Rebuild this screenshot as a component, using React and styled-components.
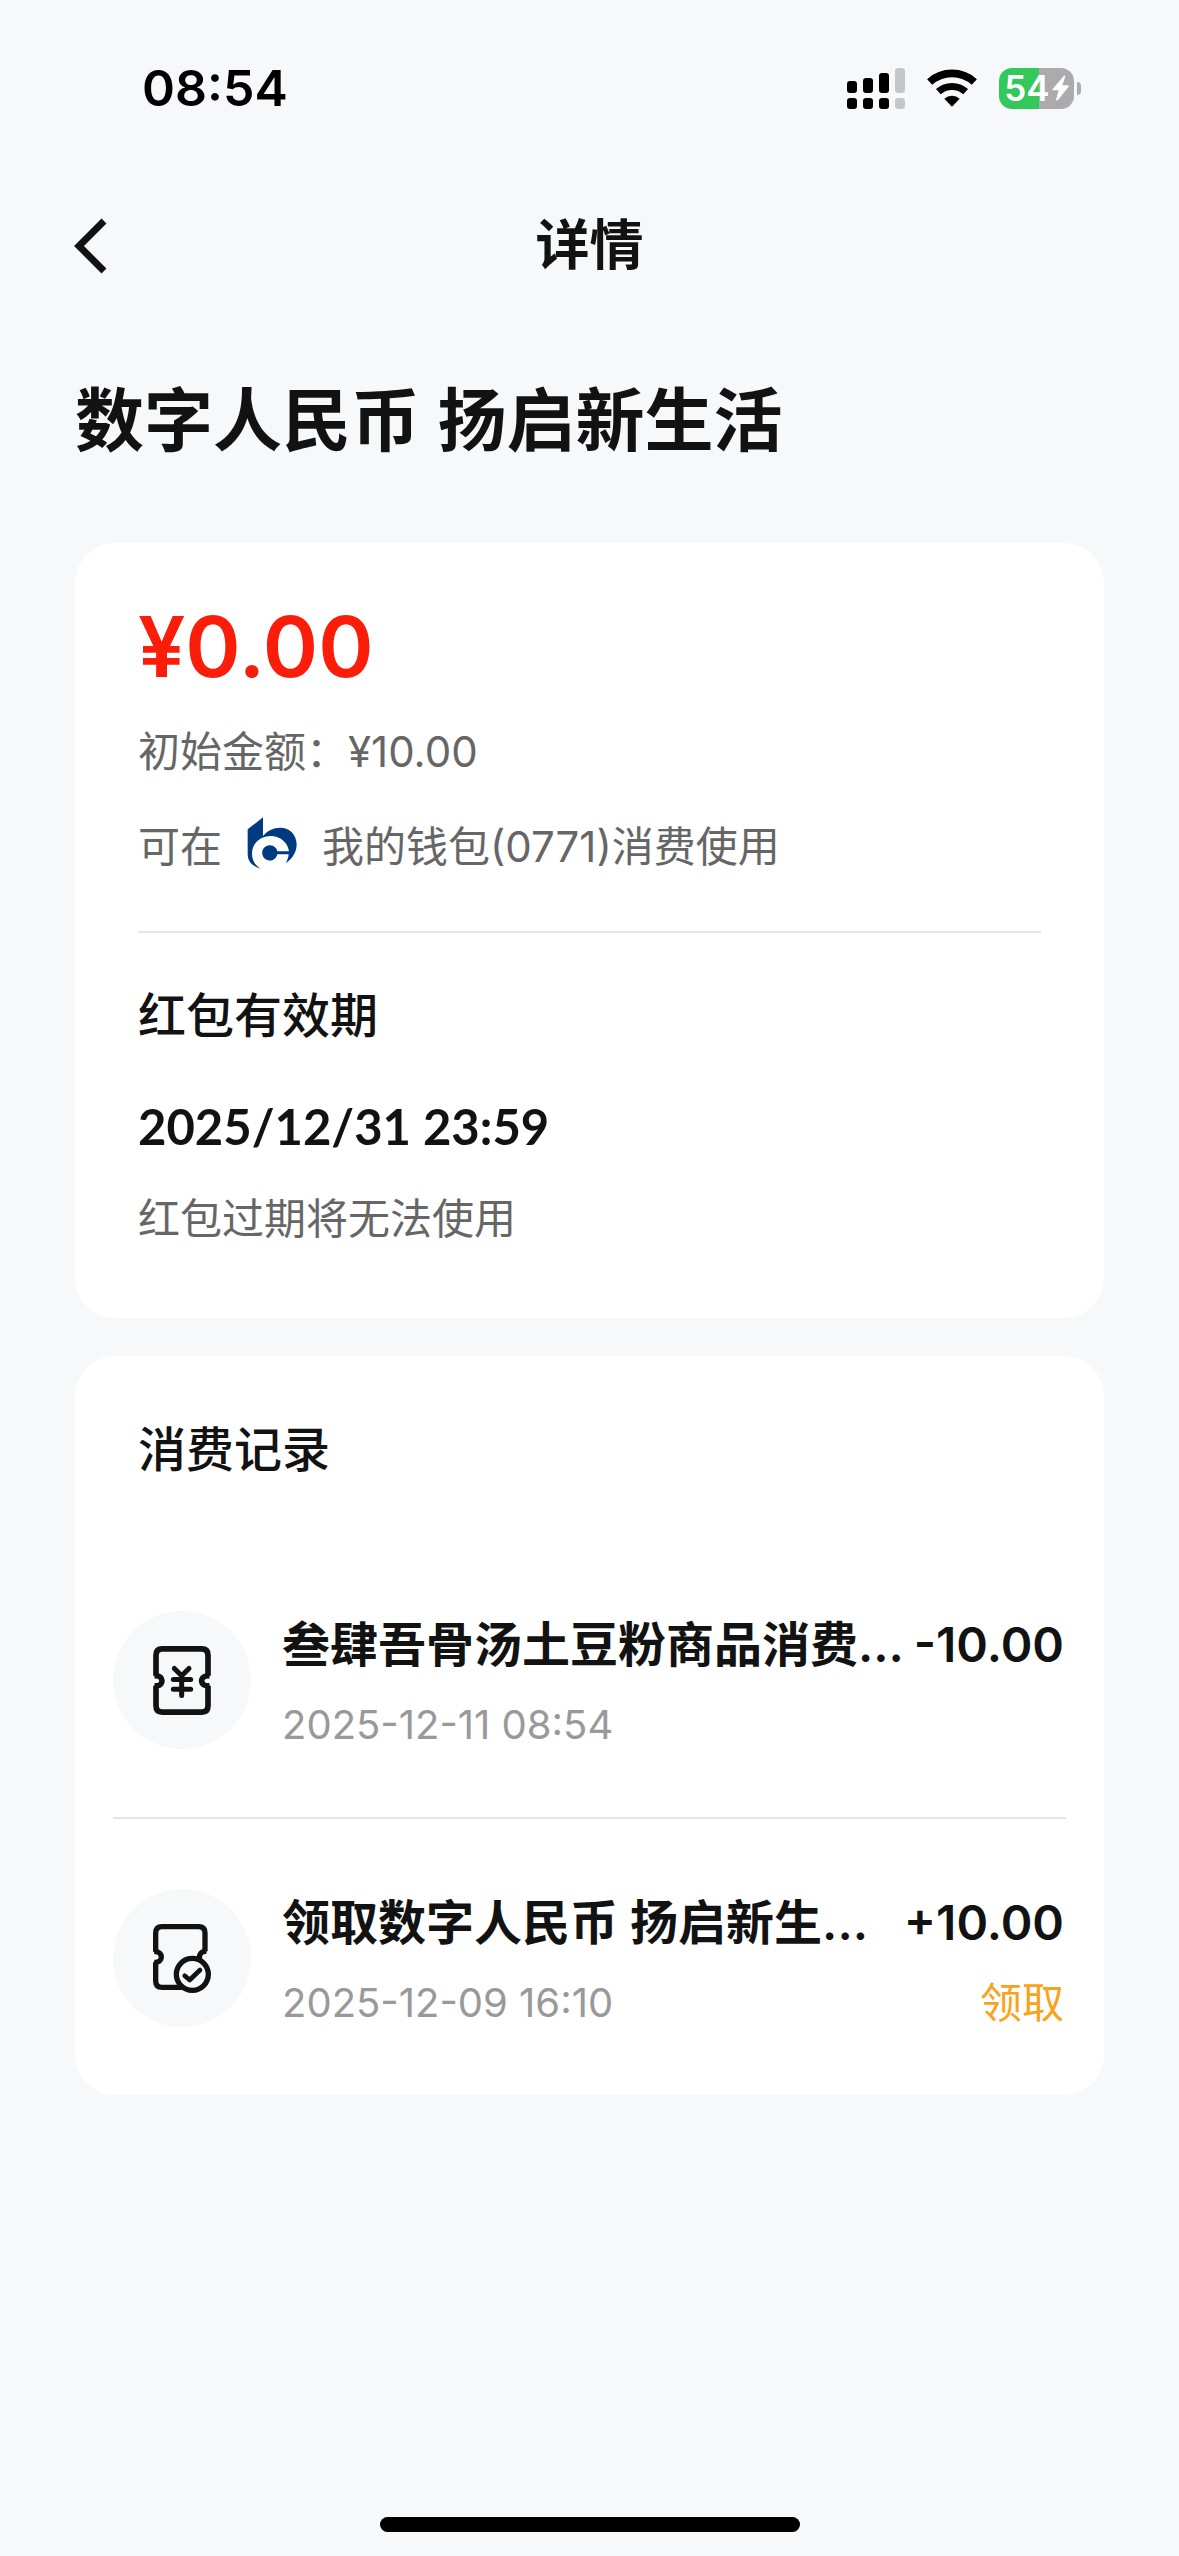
import React from "react";
import styled, { createGlobalStyle } from "styled-components";

const COLORS = {
  page: "#f7f8fa",
  card: "#ffffff",
  text: "#121212",
  muted: "#666666",
  faint: "#999999",
  line: "#e5e5e5",
  red: "#fa1e0a",
  orange: "#faa21b",
  bank: "#003a80",
};

const records = [
  {
    id: 1,
    icon: "spend",
    title: "叁肆吾骨汤土豆粉商品消费...",
    time: "2025-12-11 08:54",
    amount: "-10.00",
  },
  {
    id: 2,
    icon: "receive",
    title: "领取数字人民币 扬启新生...",
    time: "2025-12-09 16:10",
    amount: "+10.00",
    tag: "领取",
  },
];

const SignalIcon = () => (
  <svg width="58" height="41" viewBox="0 0 174 123" aria-hidden="true">
    <rect x="0" y="39" width="30" height="36" rx="9" />
    <rect x="48" y="30" width="30" height="45" rx="9" />
    <rect x="96" y="15" width="30" height="60" rx="9" />
    <rect x="144" y="0" width="30" height="75" rx="9" fill="#c5c6c8" />
    <rect x="0" y="90" width="30" height="33" rx="9" />
    <rect x="48" y="90" width="30" height="33" rx="9" />
    <rect x="96" y="90" width="30" height="33" rx="9" />
    <rect x="144" y="90" width="30" height="33" rx="9" fill="#c5c6c8" />
  </svg>
);

const WifiIcon = () => (
  <svg width="50" height="38" viewBox="0 0 150 114" aria-hidden="true">
    <g fill="none" stroke="#000">
      <path d="M8 39A100 100 0 0 1 142 39" strokeWidth="23" />
      <path d="M34 68A61 61 0 0 1 116 68" strokeWidth="21" />
    </g>
    <path d="M75 113L52 89A34 34 0 0 1 98 89Z" />
  </svg>
);

const BoltIcon = () => (
  <svg width="17" height="26" viewBox="0 0 51 78" aria-hidden="true">
    <path
      d="M36 2L2 42Q0 46 4 46H20L12 74Q14 78 18 75L50 35Q51 31 47 31H31L40 4Q39 0 36 2Z"
      fill="#fff"
    />
  </svg>
);

const BackIcon = () => (
  <svg width="33" height="56" viewBox="0 0 33 56" aria-hidden="true">
    <path d="M30 3L5 28L30 53" fill="none" stroke={COLORS.text} strokeWidth="7" />
  </svg>
);

const BankLogo = () => (
  <svg width="50" height="60" viewBox="532 861 150 180" aria-hidden="true">
    <path
      fill={COLORS.bank}
      d="M580 862L534 898V972C534 998 552 1010 574 1016C557 1007 547 991 547 971C547 940 573 918 603 918C632 918 655 938 658 964H623A23 23 0 1 0 623 973H657C656 983 653 991 648 999C668 988 681 966 681 943C681 915 660 893 632 893C610 893 594 902 580 918Z"
    />
  </svg>
);

const SpendIcon = () => (
  <svg width="58" height="69" viewBox="249 915 174 206" aria-hidden="true">
    <g fill="none" stroke={COLORS.text}>
      <path
        strokeWidth="17"
        d="M253 1004C269 1002 276 1010 276 1019C276 1028 269 1036 253 1034M258 1004V942Q258 923 277 923H395Q414 923 414 942V1004M258 1034V1094Q258 1113 277 1113H395Q414 1113 414 1094V1034M419 1004C403 1002 395 1010 395 1019C395 1028 403 1036 419 1034"
      />
      <path
        strokeWidth="15"
        strokeLinecap="round"
        strokeLinejoin="round"
        d="M313 982L335 1004L357 982M335 1004V1063M310 1015H362M310 1044H362"
      />
    </g>
  </svg>
);

const ReceiveIcon = () => (
  <svg width="58" height="69" viewBox="248 186 174 207" aria-hidden="true">
    <g fill="none" stroke={COLORS.text} strokeWidth="16">
      <path d="M251 269C266 267 273 276 273 285C273 294 266 303 251 301M256 269V213Q256 194 275 194H385Q404 194 404 213V268M256 301V357Q256 376 275 376H338M409 268C394 266 386 276 387 292" />
      <circle cx="366" cy="337" r="48" />
      <path
        strokeWidth="14"
        strokeLinecap="round"
        strokeLinejoin="round"
        d="M343 341L358 354L389 324"
      />
    </g>
  </svg>
);

const App = () => (
  <Page>
    <GlobalStyle />
    <StatusBar>
      <Clock>08:54</Clock>
      <StatusIcons>
        <SignalIcon />
        <WifiIcon />
        <BatteryWrap>
          <Battery $level={54}>
            54
            <BoltIcon />
          </Battery>
          <BatteryCap />
        </BatteryWrap>
      </StatusIcons>
    </StatusBar>

    <NavBar>
      <BackButton type="button" aria-label="返回">
        <BackIcon />
      </BackButton>
      <NavTitle>详情</NavTitle>
    </NavBar>

    <Main>
      <PageTitle>数字人民币 扬启新生活</PageTitle>

      <SummaryCard>
        <Balance>¥0.00</Balance>
        <Note>初始金额：¥10.00</Note>
        <WalletLine>
          <span>可在</span>
          <BankLogo />
          <span>我的钱包(0771)消费使用</span>
        </WalletLine>
        <Divider />
        <CardTitle>红包有效期</CardTitle>
        <Expiry>2025/12/31 23:59</Expiry>
        <Note>红包过期将无法使用</Note>
      </SummaryCard>

      <RecordsCard>
        <RecordsTitle>消费记录</RecordsTitle>
        <RecordList>
          {records.map((record) => (
            <RecordItem key={record.id}>
              <IconCircle>
                {record.icon === "spend" ? <SpendIcon /> : <ReceiveIcon />}
              </IconCircle>
              <RecordBody>
                <RecordLine>
                  <RecordName>{record.title}</RecordName>
                  <RecordAmount>{record.amount}</RecordAmount>
                </RecordLine>
                <RecordLine>
                  <RecordTime>{record.time}</RecordTime>
                  {record.tag && <RecordTag>{record.tag}</RecordTag>}
                </RecordLine>
              </RecordBody>
            </RecordItem>
          ))}
        </RecordList>
      </RecordsCard>
    </Main>

    <HomeIndicator />
  </Page>
);

const GlobalStyle = createGlobalStyle`
  *, *::before, *::after {
    box-sizing: border-box;
  }
  body {
    margin: 0;
    background: ${COLORS.page};
  }
  h1, h2, p, ul {
    margin: 0;
    padding: 0;
    font-weight: inherit;
  }
  svg {
    display: block;
    flex: none;
  }
`;

const Page = styled.div`
  display: flex;
  flex-direction: column;
  min-height: 100vh;
  background: ${COLORS.page};
  color: ${COLORS.text};
  font-family: Inter, "Noto Sans CJK SC", sans-serif;
`;

const StatusBar = styled.div`
  display: flex;
  align-items: center;
  justify-content: space-between;
  height: 141px;
  padding: 35px 98px 0 142px;
`;

const Clock = styled.span`
  font-size: 50px;
  font-weight: 600;
  color: #000;
`;

const StatusIcons = styled.div`
  display: flex;
  align-items: center;
  gap: 22px;
`;

const BatteryWrap = styled.div`
  display: flex;
  align-items: center;
  gap: 3px;
`;

const Battery = styled.div`
  display: flex;
  align-items: center;
  justify-content: center;
  gap: 2px;
  width: 75px;
  height: 41px;
  border-radius: 13px;
  background: linear-gradient(
    to right,
    #34c759 ${(props) => props.$level}%,
    #ababad ${(props) => props.$level}%
  );
  color: #fff;
  font-size: 35px;
  font-weight: 600;
  line-height: 41px;
`;

const BatteryCap = styled.div`
  width: 4px;
  height: 13px;
  border-radius: 0 6px 6px 0;
  background: #ababad;
`;

const NavBar = styled.header`
  display: grid;
  grid-template-columns: 1fr auto 1fr;
  align-items: center;
  height: 210px;
  padding: 0 74px;
`;

const BackButton = styled.button`
  justify-self: start;
  padding: 0;
  border: 0;
  background: none;
  cursor: pointer;
`;

const NavTitle = styled.span`
  font-size: 54px;
  font-weight: 600;
  line-height: 80px;
`;

const Main = styled.main`
  padding: 24px 75px 0;
`;

const PageTitle = styled.h1`
  margin-bottom: 76px;
  font-size: 69px;
  font-weight: 600;
  line-height: 92px;
`;

const Card = styled.section`
  border-radius: 40px;
  background: ${COLORS.card};
`;

const SummaryCard = styled(Card)`
  padding: 54px 63px 69px;
`;

const Balance = styled.p`
  margin-bottom: 25px;
  color: ${COLORS.red};
  font-size: 84px;
  font-weight: 600;
  line-height: 100px;
`;

const Note = styled.p`
  color: ${COLORS.muted};
  font-size: 42px;
  line-height: 60px;
`;

const WalletLine = styled(Note)`
  display: flex;
  align-items: center;
  gap: 25px;
  margin-top: 35px;
`;

const Divider = styled.hr`
  height: 2px;
  margin: 54px 0 50px;
  border: 0;
  background: ${COLORS.line};
`;

const CardTitle = styled.h2`
  font-size: 48px;
  font-weight: 500;
  line-height: 66px;
`;

const Expiry = styled.p`
  margin: 44px 0 30px;
  font-family: Lato, sans-serif;
  font-size: 49px;
  font-weight: 700;
  line-height: 66px;
`;

const RecordsCard = styled(Card)`
  margin-top: 38px;
  padding: 61px 38px 0;
`;

const RecordsTitle = styled(CardTitle)`
  margin-bottom: 58px;
  padding-left: 25px;
`;

const RecordList = styled.ul`
  list-style: none;
`;

const RecordItem = styled.li`
  display: flex;
  gap: 31px;
  padding: 70px 0 68px;

  & + & {
    border-top: 2px solid ${COLORS.line};
  }
`;

const IconCircle = styled.div`
  display: flex;
  flex: none;
  align-items: center;
  justify-content: center;
  width: 138px;
  height: 138px;
  border-radius: 50%;
  background: ${COLORS.page};
`;

const RecordBody = styled.div`
  display: flex;
  flex: 1;
  flex-direction: column;
  justify-content: space-between;
  min-width: 0;
  padding-right: 2px;
`;

const RecordLine = styled.div`
  display: flex;
  align-items: center;
  justify-content: space-between;
`;

const RecordName = styled.span`
  overflow: hidden;
  font-size: 48px;
  font-weight: 600;
  line-height: 68px;
  text-overflow: ellipsis;
  white-space: nowrap;
`;

const RecordAmount = styled.span`
  flex: none;
  font-size: 48px;
  font-weight: 600;
  line-height: 68px;
`;

const RecordTime = styled.time`
  color: ${COLORS.faint};
  font-size: 40px;
  line-height: 48px;
`;

const RecordTag = styled.span`
  color: ${COLORS.orange};
  font-size: 42px;
  line-height: 48px;
`;

const HomeIndicator = styled.div`
  width: 420px;
  height: 15px;
  margin: auto auto 24px;
  border-radius: 8px;
  background: #000;
`;

export default App;
